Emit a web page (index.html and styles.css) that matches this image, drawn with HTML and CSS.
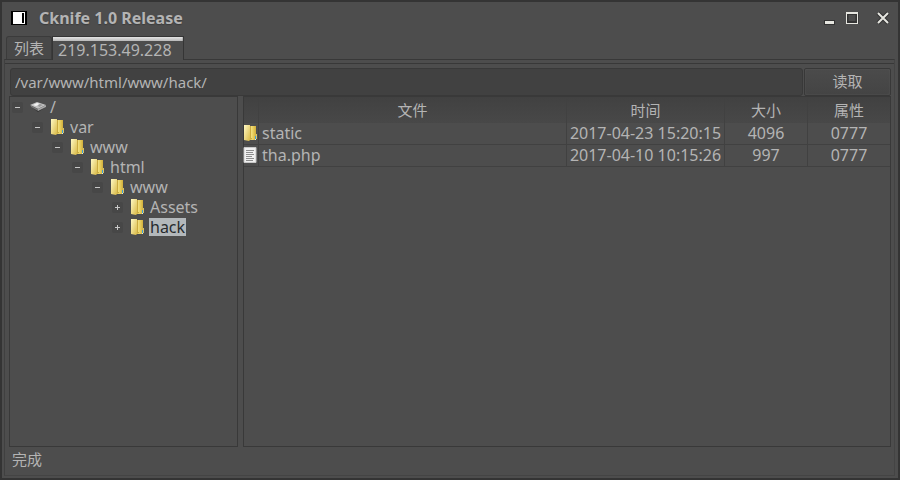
FILE: index.html
```html
<!DOCTYPE html>
<html lang="zh-CN">
<head>
<meta charset="utf-8">
<title>Cknife 1.0 Release</title>
<link rel="stylesheet" href="styles.css">
</head>
<body>
<svg class="defs" aria-hidden="true">
  <defs>
    <linearGradient id="gold" x1="0" x2="1" y1="0" y2="0">
      <stop offset="0" stop-color="#fff3a6"/><stop offset=".5" stop-color="#ecd567"/><stop offset="1" stop-color="#d2ae3a"/>
    </linearGradient>
    <linearGradient id="flap" x1="0" x2="1" y1="0" y2="1">
      <stop offset="0" stop-color="#fff9c4"/><stop offset="1" stop-color="#d9b945"/>
    </linearGradient>
    <symbol id="folder" viewBox="0 0 14 16">
      <path d="M6 1h7v14H6z" fill="url(#gold)"/>
      <path d="M1 0h6v15l-1 1-5-1z" fill="url(#flap)"/>
      <path d="M7 1h2v13l-2 1z" fill="#cbab40"/>
      <path d="M8 1h1v12H8z" fill="#f0dc7c"/>
      <path d="M13 9h1v5h-1z" fill="#d8c46a"/>
      <path d="M12 11h1v3h-1z" fill="#3f9fd8"/>
      <path d="M12 14h1v1h-1z" fill="#e8f0e0"/>
    </symbol>
    <symbol id="document" viewBox="0 0 14 16">
      <path d="M1 .5h12v15H1z" fill="#f0f0f0" stroke="#c8c8c8"/>
      <path d="M3 3.500h8M3 5.500h7M3 7.500h8M3 9.500h6M3 11.500h8M3 13.500h7" stroke="#8d8d8d"/>
    </symbol>
    <symbol id="drive" viewBox="0 0 16 10">
      <path d="M0 4l8 6 8-5V3H0z" fill="#303030"/>
      <path d="M0 3l7-3 9 3-8 4z" fill="#c2c2c2"/>
      <path d="M3 3l4-2 3 1-4 2z" fill="#f4f4f4"/>
      <path d="M8 3l2-1 3 1-4 2z" fill="#999"/>
      <path d="M0 3l8 4v2L1 5z" fill="#777"/>
      <path d="M8 7l8-4v2L8 9z" fill="#a8a8a8"/>
    </symbol>
  </defs>
</svg>
<div class="window">
  <header class="titlebar">
    <svg class="app-icon" viewBox="0 0 16 14" aria-hidden="true"><path d="M0 0h16v14H0z" fill="#000"/><path d="M2 1h12v12H2z" fill="#fff"/><path d="M11 2h2v10h-2z" fill="#000"/></svg>
    <h1 class="title">Cknife 1.0 Release</h1>
    <div class="controls">
      <button class="control" aria-label="最小化"><svg viewBox="0 0 14 14"><path d="M1 9h11v5H1z" fill="#333"/><path d="M2 10h9v3H2z" fill="#e6e6e0"/></svg></button>
      <button class="control" aria-label="最大化"><svg viewBox="0 0 14 14"><path d="M1 2.500h10v9H1z" fill="none" stroke="#333" stroke-width="3"/><path d="M0 1h12v12H0zM1 3v9h10V3z" fill="#e6e6e0" fill-rule="evenodd"/></svg></button>
      <button class="control control-close" aria-label="关闭"><svg viewBox="0 0 14 14"><path d="M2 2l10 10M12 2L2 12" stroke="#333" stroke-width="4"/><path d="M2 2l10 10M12 2L2 12" stroke="#e6e6e0" stroke-width="2"/></svg></button>
    </div>
  </header>
  <nav class="tabs" role="tablist">
    <button class="tab" role="tab" aria-selected="false">列表</button>
    <button class="tab tab-active" role="tab" aria-selected="true">219.153.49.228</button>
  </nav>
  <main class="panel">
    <form class="pathbar">
      <input class="path" type="text" aria-label="路径" value="/var/www/html/www/hack/">
      <button class="read" type="button">读取</button>
    </form>
    <div class="browser">
      <section class="pane tree" aria-label="目录">
        <ul class="branch">
          <li><div class="node"><button class="toggle open" aria-label="折叠"></button><svg class="drive"><use href="#drive"/></svg><span class="name">/</span></div>
            <ul class="branch">
              <li><div class="node"><button class="toggle open" aria-label="折叠"></button><svg class="icon"><use href="#folder"/></svg><span class="name">var</span></div>
                <ul class="branch">
                  <li><div class="node"><button class="toggle open" aria-label="折叠"></button><svg class="icon"><use href="#folder"/></svg><span class="name">www</span></div>
                    <ul class="branch">
                      <li><div class="node"><button class="toggle open" aria-label="折叠"></button><svg class="icon"><use href="#folder"/></svg><span class="name">html</span></div>
                        <ul class="branch">
                          <li><div class="node"><button class="toggle open" aria-label="折叠"></button><svg class="icon"><use href="#folder"/></svg><span class="name">www</span></div>
                            <ul class="branch">
                              <li><div class="node"><button class="toggle" aria-label="展开"></button><svg class="icon"><use href="#folder"/></svg><span class="name">Assets</span></div></li>
                              <li><div class="node"><button class="toggle" aria-label="展开"></button><svg class="icon"><use href="#folder"/></svg><span class="name selected">hack</span></div></li>
                            </ul>
                          </li>
                        </ul>
                      </li>
                    </ul>
                  </li>
                </ul>
              </li>
            </ul>
          </li>
        </ul>
      </section>
      <section class="pane files" aria-label="文件">
        <table class="table">
          <colgroup><col class="col-icon"><col><col class="col-time"><col class="col-size"><col class="col-mode"></colgroup>
          <thead><tr><th></th><th>文件</th><th>时间</th><th>大小</th><th>属性</th></tr></thead>
          <tbody>
            <tr><td><svg class="icon"><use href="#folder"/></svg></td><td class="file">static</td><td>2017-04-23 15:20:15</td><td>4096</td><td>0777</td></tr>
            <tr><td><svg class="icon"><use href="#document"/></svg></td><td class="file">tha.php</td><td>2017-04-10 10:15:26</td><td>997</td><td>0777</td></tr>
          </tbody>
        </table>
      </section>
    </div>
    <footer class="status">完成</footer>
  </main>
</div>
</body>
</html>
```

FILE: styles.css
```css
* {
  box-sizing: border-box;
}

body {
  margin: 0;
  background: #4d4d4d;
  color: #b4b4b4;
  font: 16px/20px "Noto Sans", "Noto Sans CJK SC", sans-serif;
}

button,
input {
  margin: 0;
  border: 0;
  padding: 0;
  background: none;
  color: inherit;
  font: inherit;
}

svg {
  display: block;
}

.defs {
  position: absolute;
  width: 0;
  height: 0;
}

.window {
  display: flex;
  flex-direction: column;
  min-height: 100vh;
  padding: 0 3px 2px 2px;
  border: 2px solid #343434;
  background: #4d4d4d;
}

.titlebar {
  display: flex;
  align-items: center;
  height: 34px;
  padding: 0 5px 2px 7px;
}

.app-icon {
  width: 16px;
  height: 14px;
}

.title {
  flex: 1;
  margin: 0 0 0 12px;
  font-size: 16px;
  font-weight: 700;
  line-height: 22px;
  text-shadow: 0 1px 1px #3c3c3c;
}

.controls {
  display: flex;
  gap: 9px;
}

.control svg {
  width: 14px;
  height: 14px;
}

.control-close {
  margin-left: 7px;
}

.tabs {
  display: flex;
  height: 23px;
  padding-left: 2px;
}

.tab {
  height: 23px;
  padding: 0 7px;
  border: 1px solid #3b3b3b;
  border-bottom: 0;
  border-radius: 3px 3px 0 0;
  background: #484848;
  font-size: 15px;
}

.tab-active {
  position: relative;
  height: 24px;
  padding: 2px 11px 0 5px;
  border-color: #353535;
  border-radius: 0;
  background: linear-gradient(#e4e4e4, #b8b8b8) top / 100% 4px no-repeat, #4d4d4d;
  font-size: 16px;
}

.panel {
  display: flex;
  flex: 1;
  flex-direction: column;
  padding: 8px 3px 0 4px;
  border: 1px solid #383838;
  border-right-color: #444;
  border-bottom-color: #444;
  border-left-color: #404040;
  box-shadow: inset 0 3px #4d4d4d, inset 0 4px #383838;
}

.pathbar {
  display: flex;
  gap: 1px;
  margin-left: 1px;
}

.path {
  flex: 1;
  min-width: 0;
  height: 28px;
  padding: 0 4px 1px;
  border: 1px solid #393939;
  border-radius: 3px;
  background: #414141;
  font-size: 15px;
}

.read {
  width: 87px;
  height: 28px;
  padding-bottom: 2px;
  border: 1px solid #383838;
  border-radius: 2px;
  background: linear-gradient(#4b4b4b, #444);
  box-shadow: inset 0 0 2px #5a5a5a;
  font-size: 15px;
}

.browser {
  display: flex;
  flex: 1;
  gap: 5px;
}

.pane {
  border: 1px solid #393939;
}

.tree {
  flex: 0 1 229px;
  padding: 0 0 0 2px;
}

.branch {
  margin: 0;
  padding: 0;
  list-style: none;
}

.branch .branch {
  padding-left: 20px;
}

.node {
  display: flex;
  align-items: center;
  height: 20px;
}

.toggle {
  width: 11px;
  height: 11px;
  border-radius: 2px;
  background: linear-gradient(#c8c8c8, #c8c8c8) center / 5px 1px no-repeat, linear-gradient(#c8c8c8, #c8c8c8) center / 1px 5px no-repeat, #474747;
}

.toggle.open {
  background: linear-gradient(#c8c8c8, #c8c8c8) center / 5px 1px no-repeat, #474747;
}

.icon {
  width: 14px;
  height: 16px;
}

.node .icon {
  margin: 0 5px 0 7px;
}

.table .icon {
  margin-left: -1px;
}

.drive {
  width: 16px;
  height: 10px;
  margin: 0 3px 0 7px;
}

.name {
  padding: 0 1px;
  line-height: 18px;
}

.selected {
  background: #b3b8bb;
  color: #272b2e;
}

.files {
  flex: 1;
}

.table {
  width: 100%;
  border-collapse: separate;
  border-spacing: 0;
  table-layout: fixed;
  text-align: center;
}

.col-icon {
  width: 15px;
}

.col-time {
  width: 158px;
}

.col-size {
  width: 83px;
}

.col-mode {
  width: 82px;
}

.table th {
  height: 26px;
  padding: 0;
  border-right: 1px solid #414141;
  background: linear-gradient(#414141, #484848);
  font-size: 15px;
  font-weight: 400;
}

.table td {
  height: 22px;
  padding: 0 0 2px;
  border-right: 1px solid #414141;
  border-bottom: 1px solid #414141;
  line-height: 18px;
}

.table th:last-child,
.table td:last-child {
  border-right: 0;
}

.table .file {
  padding-left: 3px;
  text-align: left;
}

.status {
  height: 28px;
  padding: 2px 3px;
  font-size: 15px;
}
```
